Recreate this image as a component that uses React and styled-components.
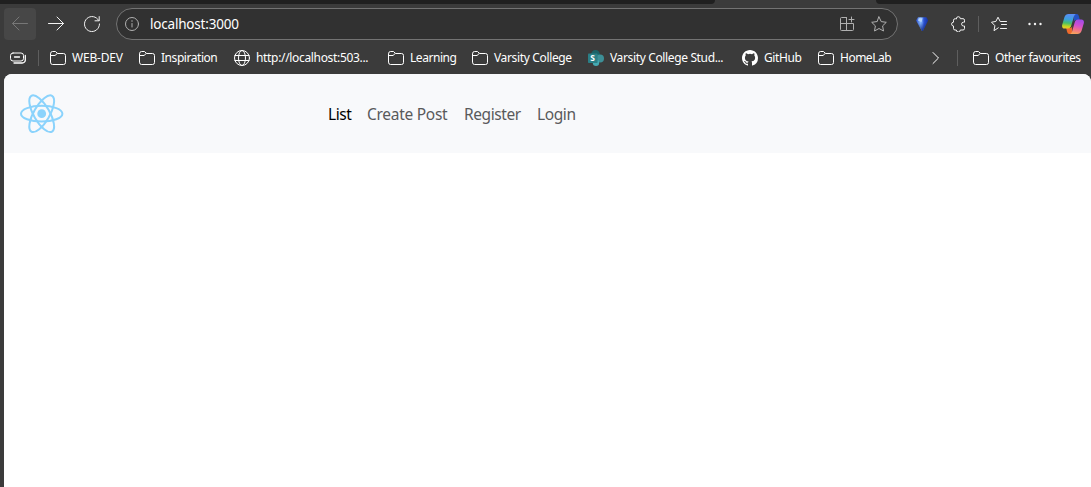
import React from "react";
import styled, { createGlobalStyle } from "styled-components";

const GlobalStyle = createGlobalStyle`
  * { box-sizing: border-box; }
  body { margin: 0; overflow: hidden; background: #3b3b3b; }
`;

const Browser = styled.div`
  display: flex;
  flex-direction: column;
  height: 100vh;
  background: #3b3b3b;
  color: #fff;
  font-family: "Noto Sans", "Open Sans", sans-serif;
`;

const TabStrip = styled.div`
  display: flex;
  justify-content: space-between;
  height: 4px;
  flex: none;
`;

const TabGap = styled.div`
  width: ${(p) => p.$width}px;
  background: #202020;
  border-radius: ${(p) => (p.$side === "left" ? "0 0 5px 0" : "0 0 0 5px")};
`;

const Toolbar = styled.div`
  display: flex;
  align-items: center;
  height: 40px;
  flex: none;
  padding-left: 4px;
`;

const ToolButton = styled.div`
  display: flex;
  align-items: center;
  justify-content: center;
  width: ${(p) => p.$width || 32}px;
  height: 32px;
  flex: none;
  border-radius: 4px;
  margin-right: ${(p) => p.$gap || 0}px;
  background: ${(p) => (p.$active ? "#474747" : "transparent")};
  color: ${(p) => p.$color || "#f2f2f2"};
`;

const AddressBar = styled.div`
  display: flex;
  align-items: center;
  width: 782px;
  height: 32px;
  flex: none;
  padding: 0 10px 0 7px;
  border: 1px solid #737373;
  border-radius: 16px;
  background: #313131;
  color: #b0b0b0;
`;

const AddressActions = styled.div`
  display: flex;
  gap: 16px;
`;

const Url = styled.span`
  flex: 1;
  margin-left: 10px;
  color: #fff;
  font-size: 13.5px;
  line-height: 20px;
  letter-spacing: ${(p) => p.$spacing}px;
`;

const Divider = styled.div`
  width: 1px;
  height: 16px;
  flex: none;
  background: #5e5e5e;
  margin: 0 ${(p) => p.$right}px 0 ${(p) => p.$left}px;
`;

const BookmarksBar = styled.div`
  display: flex;
  align-items: center;
  height: 30px;
  flex: none;
  padding: 0 0 2px 10px;
`;

const Bookmark = styled.div`
  display: flex;
  align-items: center;
  gap: 6px;
  width: ${(p) => p.$width}px;
  flex: none;
  white-space: nowrap;
  font-size: 12px;
  line-height: 16px;
  letter-spacing: ${(p) => p.$spacing}px;
`;

const Icon = styled.svg`
  display: block;
  flex: none;
  width: ${(p) => p.$size || 16}px;
  height: ${(p) => p.$size || 16}px;
  fill: none;
  stroke: currentColor;
  stroke-width: ${(p) => p.$stroke || 1};
  stroke-linecap: round;
  stroke-linejoin: round;
`;

const Page = styled.main`
  flex: 1;
  margin-left: 4px;
  overflow: hidden;
  border-radius: 8px 8px 0 0;
  background: #fff;
`;

const Navbar = styled.nav`
  display: flex;
  align-items: center;
  height: 79px;
  padding-left: 12px;
  background: #f8f9fb;
`;

const Brand = styled.a`
  display: flex;
  width: 312px;
`;

const NavLinks = styled.div`
  display: flex;
`;

const NavItem = styled.a`
  width: ${(p) => p.$width}px;
  white-space: nowrap;
  font-size: 15.5px;
  line-height: 24px;
  letter-spacing: ${(p) => p.$spacing}px;
  color: ${(p) => (p.$active ? "#000" : "#595a5b")};
`;

const Folder = () => (
  <Icon viewBox="0 0 16 16">
    <path d="M.5 3.5a2 2 0 0 1 2-2h3l2 2h6a2 2 0 0 1 2 2v7a2 2 0 0 1-2 2h-11a2 2 0 0 1-2-2zM.5 5.5H5l2.2-2" />
  </Icon>
);

const Globe = () => (
  <Icon viewBox="0 0 16 16">
    <circle cx="8" cy="8" r="7.5" />
    <ellipse cx="8" cy="8" rx="3.5" ry="7.5" />
    <path d="M1 5.5h14M1 10.5h14" />
  </Icon>
);

const SharePoint = () => (
  <Icon viewBox="0 0 16 16">
    <g stroke="none">
      <circle cx="7.5" cy="4.6" r="4.5" fill="#1c6267" />
      <circle cx="12" cy="8.4" r="4" fill="#3d8f97" />
      <circle cx="8" cy="12.8" r="3.2" fill="#45a9b2" />
      <rect x="0" y="3.4" width="9.6" height="9.6" rx=".8" fill="#2a7f86" />
      <text x="2.2" y="11.2" fill="#fff" fontSize="8.5" fontWeight="700" fontFamily="Open Sans, sans-serif">S</text>
    </g>
  </Icon>
);

const GitHub = () => (
  <Icon viewBox="0 0 16 16">
    <path fill="#fff" stroke="none" d="M8 0C3.58 0 0 3.58 0 8c0 3.54 2.29 6.53 5.47 7.59.4.07.55-.17.55-.38 0-.19-.01-.82-.01-1.49-2.01.37-2.53-.49-2.69-.94-.09-.23-.48-.94-.82-1.13-.28-.15-.68-.52-.01-.53.63-.01 1.08.58 1.23.82.72 1.21 1.87.87 2.33.66.07-.52.28-.87.51-1.07-1.78-.2-3.64-.89-3.64-3.95 0-.87.31-1.59.82-2.15-.08-.2-.36-1.02.08-2.12 0 0 .67-.21 2.2.82a7.6 7.6 0 0 1 4 0c1.53-1.04 2.2-.82 2.2-.82.44 1.1.16 1.92.08 2.12.51.56.82 1.27.82 2.15 0 3.07-1.87 3.75-3.65 3.95.29.25.54.73.54 1.48 0 1.07-.01 1.93-.01 2.2 0 .21.15.46.55.38A8 8 0 0 0 16 8c0-4.42-3.58-8-8-8z" />
  </Icon>
);

const Copilot = () => (
  <Icon $size={22} viewBox="0 0 22 22">
    <defs>
      <linearGradient id="cp-left" x1=".4" y1="0" x2=".3" y2="1">
        <stop offset="0" stopColor="#5b8df5" />
        <stop offset=".35" stopColor="#3c9fe0" />
        <stop offset=".62" stopColor="#45bd6a" />
        <stop offset=".85" stopColor="#c3d420" />
        <stop offset="1" stopColor="#efc82a" />
      </linearGradient>
      <linearGradient id="cp-right" x1=".6" y1="0" x2=".4" y2="1">
        <stop offset="0" stopColor="#a04be8" />
        <stop offset=".4" stopColor="#d04fd0" />
        <stop offset=".7" stopColor="#f0708c" />
        <stop offset="1" stopColor="#f5a35c" />
      </linearGradient>
    </defs>
    <path fill="#2451c4" stroke="none" d="M12 1h2.500c1.500 0 2 .8 2.500 2.500L17.800 7H14c-1 0-1.800.6-2.200 2z" />
    <path fill="#ee6a2c" stroke="none" d="M10 21H7.500c-1.500 0-2-.8-2.500-2.500L4.200 15H8c1 0 1.800-.6 2.200-2z" />
    <path fill="url(#cp-left)" stroke="none" d="M6.500 1H14c-1.400.4-2 2-2.500 4L9.300 12.500C8.700 14.800 7.600 15.500 6 15.500H2.600C.6 15.500-.3 14 .2 11.800L2.500 4C3.200 1.900 4.600 1 6.500 1z" />
    <path fill="url(#cp-right)" stroke="none" d="M15.500 21H8c1.400-.4 2-2 2.500-4l2.200-7.500c.6-2.300 1.700-3 3.300-3h3.400c2 0 2.900 1.500 2.400 3.700L19.500 18c-.7 2.100-2.100 3-4 3z" />
  </Icon>
);

const Gem = () => (
  <Icon $size={14} viewBox="0 0 14 14">
    <defs>
      <linearGradient id="gem" x1="0" x2="1">
        <stop offset="0" stopColor="#2447c8" />
        <stop offset=".35" stopColor="#86b6fa" />
        <stop offset=".5" stopColor="#6897f3" />
        <stop offset=".65" stopColor="#2a50d0" />
        <stop offset="1" stopColor="#16309b" />
      </linearGradient>
      <linearGradient id="gem-shade" x1="0" x2="0" y1="0" y2="1">
        <stop offset=".4" stopColor="#16308f" stopOpacity="0" />
        <stop offset="1" stopColor="#16308f" />
      </linearGradient>
    </defs>
    <path fill="url(#gem)" stroke="none" d="M3 .3h8.500L13.200 3.500 7.800 14H7L1 3.500z" />
    <path fill="url(#gem-shade)" stroke="none" d="M3 .3h8.500L13.200 3.500 7.800 14H7L1 3.500z" />
    <path fill="#b3d3fb" stroke="none" d="M3.800 1.200h3.700l-1 4L3 3.500z" />
  </Icon>
);

const ReactLogo = () => (
  <Icon $size={50} $stroke={2} viewBox="-25.7 -24.7 50 50" color="#8bd3fc">
    <circle r="4.400" fill="currentColor" stroke="none" />
    <ellipse rx="20.700" ry="7.900" />
    <ellipse rx="20.700" ry="7.900" transform="rotate(60)" />
    <ellipse rx="20.700" ry="7.900" transform="rotate(120)" />
  </Icon>
);

const STAR = "M8 .9l2.200 4.700 5.100.7-3.700 3.600.9 5.100L8 12.500 3.500 15l.9-5.100L.7 6.300l5.100-.7z";

const bookmarks = [
  { label: "WEB-DEV", icon: Folder, width: 89, spacing: -0.2 },
  { label: "Inspiration", icon: Folder, width: 95, spacing: -0.45 },
  { label: "http://localhost:503...", icon: Globe, width: 154, spacing: -0.33 },
  { label: "Learning", icon: Folder, width: 84, spacing: -0.45 },
  { label: "Varsity College", icon: Folder, width: 116, spacing: -0.35 },
  { label: "Varsity College Stud...", icon: SharePoint, width: 154, spacing: -0.36 },
  { label: "GitHub", icon: GitHub, width: 76, spacing: -0.4 },
  { label: "HomeLab", icon: Folder, width: 110, spacing: -0.5 },
];

const links = [
  { label: "List", width: 39, spacing: -0.4, active: true },
  { label: "Create Post", width: 97, spacing: -0.28 },
  { label: "Register", width: 73, spacing: -0.42 },
  { label: "Login", width: 60, spacing: -0.4 },
];

export default function App() {
  return (
    <Browser>
      <GlobalStyle />
      <TabStrip>
        <TabGap $width={715} $side="left" />
        <TabGap $width={215} $side="right" />
      </TabStrip>
      <Toolbar>
        <ToolButton $active $gap={4} $color="#777">
          <Icon viewBox="0 0 16 16"><path d="M15.500 7.500H.5M7 1L.5 7.500 7 14" /></Icon>
        </ToolButton>
        <ToolButton $gap={4}>
          <Icon viewBox="0 0 16 16"><path d="M.5 7.500h15M9 1l6.500 6.500L9 14" /></Icon>
        </ToolButton>
        <ToolButton $gap={8}>
          <Icon viewBox="0 0 16 16"><path d="M15.500 8A7.500 7.500 0 1 1 13.800 3.300L15 4.500M15.200.6v4.200H11" /></Icon>
        </ToolButton>
        <AddressBar>
          <Icon viewBox="0 0 16 16">
            <circle cx="8" cy="8" r="6.500" />
            <path d="M8 7.500v3.500" />
            <path d="M8 5v.1" strokeWidth="1.500" />
          </Icon>
          <Url $spacing={-0.2}>localhost:3000</Url>
          <AddressActions>
            <Icon viewBox="0 0 16 16">
              <path d="M7.500 1.500h-5a1 1 0 0 0-1 1v11a1 1 0 0 0 1 1h11a1 1 0 0 0 1-1v-6h-13M7.500 1.500v13M12.500 1v5M10 3.500h5" />
            </Icon>
            <Icon viewBox="0 0 16 16"><path d={STAR} /></Icon>
          </AddressActions>
        </AddressBar>
        <ToolButton $width={48}><Gem /></ToolButton>
        <ToolButton $width={24}>
          <Icon viewBox="0 0 16 16">
            <path d="M6.300 2.700a2 2 0 0 1 4 0h2.700a1.500 1.500 0 0 1 1.500 1.500v2h-1a1.900 1.900 0 0 0 0 3.800h1v2.500a1.500 1.500 0 0 1-1.500 1.500h-2.700a2 2 0 0 1-4 0H5A1.500 1.500 0 0 1 3.500 12.500V10a1.900 1.900 0 0 1 0-3.800v-2A1.500 1.500 0 0 1 5 2.700z" />
          </Icon>
        </ToolButton>
        <Divider $left={8} $right={4} />
        <ToolButton $gap={4}>
          <Icon viewBox="0 0 16 16">
            <path d="M7.300 11.800L3 14.700l.9-5L.5 6.200l4.400-.8L7 1.200l2.200 4.300H15.500M10.500 8.500h5M9.500 12.500h6" />
          </Icon>
        </ToolButton>
        <ToolButton $gap={6}>
          <Icon viewBox="0 0 16 16">
            <g fill="currentColor" stroke="none">
              <circle cx="2.500" cy="8" r="1.200" /><circle cx="8" cy="8" r="1.200" /><circle cx="13.500" cy="8" r="1.200" />
            </g>
          </Icon>
        </ToolButton>
        <ToolButton $width={32}><Copilot /></ToolButton>
      </Toolbar>
      <BookmarksBar>
        <Icon viewBox="0 0 16 16">
          <rect x=".5" y="3" width="13" height="8" rx="2.500" />
          <path d="M4.500 7h5M15.300 5.500V10a3 3 0 0 1-3 3H4" strokeWidth="1.300" />
        </Icon>
        <Divider $left={12} $right={11} />
        {bookmarks.map(({ label, icon: Glyph, width, spacing }) => (
          <Bookmark key={label} $width={width} $spacing={spacing}>
            <Glyph />{label}
          </Bookmark>
        ))}
        <Icon viewBox="0 0 16 16"><path d="M5 2.500L10.500 8 5 13.500" /></Icon>
        <Divider $left={13} $right={15} />
        <Bookmark $width={112} $spacing={-0.43}><Folder />Other favourites</Bookmark>
      </BookmarksBar>
      <Page>
        <Navbar>
          <Brand><ReactLogo /></Brand>
          <NavLinks>
            {links.map(({ label, width, spacing, active }) => (
              <NavItem key={label} $width={width} $spacing={spacing} $active={active}>{label}</NavItem>
            ))}
          </NavLinks>
        </Navbar>
      </Page>
    </Browser>
  );
}
